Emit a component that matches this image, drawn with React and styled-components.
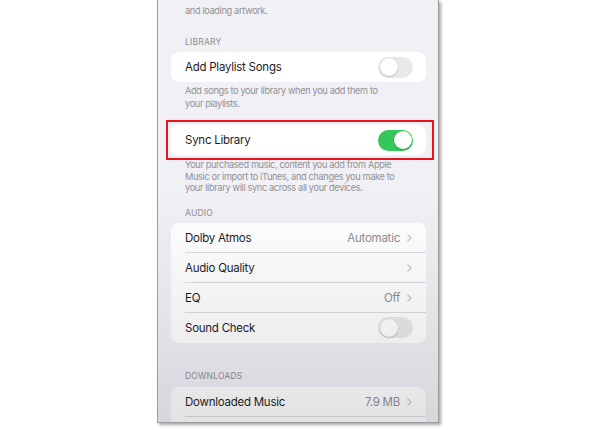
import React from "react";
import styled, { createGlobalStyle } from "styled-components";

const Global = createGlobalStyle`
  html, body { margin: 0; padding: 0; background: #ffffff; }
  body { font-family: Inter, "Noto Sans", sans-serif; -webkit-font-smoothing: antialiased; }
`;

const Page = styled.div`
  width: 600px;
  height: 430px;
  overflow: hidden;
  background: #ffffff;
`;

const Phone = styled.div`
  position: relative;
  margin-left: 157px;
  width: 280px;
  height: 422px;
  background: #f0f0f5;
  border: 1px solid #9d9d9f;
  border-top: none;
  box-shadow: 2px 2px 3px rgba(0, 0, 0, 0.35);
  overflow: hidden;
`;

const Shade = styled.div`
  position: absolute;
  inset: 0;
  pointer-events: none;
  background: linear-gradient(
    to bottom,
    rgba(40, 40, 50, 0) 0%,
    rgba(40, 40, 50, 0) 45%,
    rgba(40, 40, 50, 0.06) 72%,
    rgba(40, 40, 50, 0.13) 100%
  );
`;

const Content = styled.div`
  padding: 5px 12px 0 13px;
`;

const Note = styled.div`
  padding: 0 14px;
  margin-top: ${(p) => p.$mt ?? 3}px;
  font-size: 9.2px;
  line-height: ${(p) => p.$lh ?? 12}px;
  color: #909095;
  letter-spacing: -0.35px;
  white-space: nowrap;
`;

const Header = styled.div`
  padding: 0 14px;
  margin-top: ${(p) => p.$mt}px;
  margin-bottom: ${(p) => p.$mb ?? 4}px;
  font-size: 8.5px;
  line-height: 11px;
  color: #8e8e93;
  letter-spacing: 0.2px;
  text-transform: uppercase;
`;

const Card = styled.div`
  background: #ffffff;
  border-radius: 8px;
  overflow: hidden;
`;

const Row = styled.div`
  display: flex;
  align-items: center;
  height: 30px;
  margin-left: 14px;
  padding-right: 13px;
  box-shadow: ${(p) => (p.$sep ? "inset 0 -1px 0 #dcdce0" : "none")};
`;

const Label = styled.div`
  flex: 1;
  font-size: 11.5px;
  color: #1c1c1e;
  letter-spacing: -0.25px;
  white-space: nowrap;
`;

const Value = styled.div`
  font-size: 11.5px;
  color: #8e8e93;
  letter-spacing: -0.25px;
  margin-right: 7px;
  white-space: nowrap;
`;

const Chevron = () => (
  <svg width="5" height="8" viewBox="0 0 5 8" style={{ marginRight: 1 }}>
    <path d="M0.8 0.8 L4 4 L0.8 7.2" fill="none" stroke="#c4c4c8" strokeWidth="1.2" strokeLinecap="round" strokeLinejoin="round" />
  </svg>
);

const Track = styled.div`
  position: relative;
  width: 35px;
  height: 21px;
  border-radius: 11px;
  background: ${(p) => (p.$on ? "#34c759" : "#e9e9eb")};
`;

const Knob = styled.div`
  position: absolute;
  top: 1.5px;
  left: ${(p) => (p.$on ? "15.5px" : "1.5px")};
  width: 18px;
  height: 18px;
  border-radius: 50%;
  background: #ffffff;
  box-shadow: 0 1px 2px rgba(0, 0, 0, 0.18), 0 0 0 0.5px rgba(0, 0, 0, 0.04);
`;

const Toggle = ({ on }) => (
  <Track $on={on}>
    <Knob $on={on} />
  </Track>
);

const Highlight = styled.div`
  margin: 10px -8px 0 -5px;
  padding: 3px 6px 3px 3px;
  border: 2px solid #e8141b;
`;

export default function App() {
  return (
    <Page>
      <Global />
      <Phone>
        <Content>
          <Note $mt={0}>and loading artwork.</Note>

          <Header $mt={20}>Library</Header>
          <Card>
            <Row>
              <Label>Add Playlist Songs</Label>
              <Toggle on={false} />
            </Row>
          </Card>
          <Note $mt={3} $lh={12.5}>
            Add songs to your library when you add them to
            <br />
            your playlists.
          </Note>

          <Highlight>
            <Card>
              <Row>
                <Label>Sync Library</Label>
                <Toggle on={true} />
              </Row>
            </Card>
          </Highlight>
          <Note $mt={-1} $lh={11.7}>
            Your purchased music, content you add from Apple
            <br />
            Music or import to iTunes, and changes you make to
            <br />
            your library will sync across all your devices.
          </Note>

          <Header $mt={13.5}>Audio</Header>
          <Card>
            <Row $sep>
              <Label>Dolby Atmos</Label>
              <Value>Automatic</Value>
              <Chevron />
            </Row>
            <Row $sep>
              <Label>Audio Quality</Label>
              <Chevron />
            </Row>
            <Row $sep>
              <Label>EQ</Label>
              <Value>Off</Value>
              <Chevron />
            </Row>
            <Row>
              <Label>Sound Check</Label>
              <Toggle on={false} />
            </Row>
          </Card>

          <Header $mt={28} $mb={5.5}>Downloads</Header>
          <Card>
            <Row $sep>
              <Label>Downloaded Music</Label>
              <Value>7.9 MB</Value>
              <Chevron />
            </Row>
            <Row />
          </Card>
        </Content>
        <Shade />
      </Phone>
    </Page>
  );
}
